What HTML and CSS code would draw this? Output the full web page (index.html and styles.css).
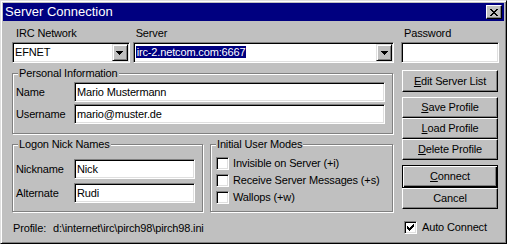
FILE: index.html
```html
<!DOCTYPE html>
<html lang="en">
<head>
  <meta charset="UTF-8" />
  <meta name="viewport" content="width=device-width, initial-scale=1.0" />
  <title>Server Connection</title>
  <link rel="stylesheet" href="styles.css">
</head>
<body>
  <div class="window">
    <div class="titlebar">
      <span class="title">Server Connection</span>
      <div class="close-btn">
        <svg width="8" height="7" viewBox="0 0 8 7" shape-rendering="crispEdges"><path d="M0 0h2v1H0z M6 0h2v1H6z M1 1h2v1H1z M5 1h2v1H5z M2 2h4v1H2z M3 3h2v1H3z M2 4h4v1H2z M1 5h2v1H1z M5 5h2v1H5z M0 6h2v1H0z M6 6h2v1H6z" fill="#000"/></svg>
      </div>
    </div>
    <div class="content">
      <div class="main">
        <div class="top-row">
          <div class="net-field">
            <div class="caption">IRC Network</div>
            <div class="combo">
              <span class="combo-value">EFNET</span>
              <span class="drop-btn"><svg width="7" height="4" viewBox="0 0 7 4" shape-rendering="crispEdges"><path d="M0 0h7v1H0z M1 1h5v1H1z M2 2h3v1H2z M3 3h1v1H3z" fill="#000"/></svg></span>
            </div>
          </div>
          <div class="server-field">
            <div class="caption">Server</div>
            <div class="combo">
              <span class="combo-value"><span class="selected">irc-2.netcom.com:6667</span></span>
              <span class="drop-btn"><svg width="7" height="4" viewBox="0 0 7 4" shape-rendering="crispEdges"><path d="M0 0h7v1H0z M1 1h5v1H1z M2 2h3v1H2z M3 3h1v1H3z" fill="#000"/></svg></span>
            </div>
          </div>
        </div>

        <div class="group personal">
          <span class="group-title">Personal Information</span>
          <div class="form-row">
            <span class="row-label">Name</span>
            <div class="edit wide">Mario Mustermann</div>
          </div>
          <div class="form-row">
            <span class="row-label">Username</span>
            <div class="edit wide">mario@muster.de</div>
          </div>
        </div>

        <div class="lower-row">
          <div class="group nicks">
            <span class="group-title">Logon Nick Names</span>
            <div class="form-row">
              <span class="row-label">Nickname</span>
              <div class="edit short">Nick</div>
            </div>
            <div class="form-row">
              <span class="row-label">Alternate</span>
              <div class="edit short">Rudi</div>
            </div>
          </div>
          <div class="group modes">
            <span class="group-title">Initial User Modes</span>
            <div class="check-row"><span class="checkbox"></span>Invisible on Server (+i)</div>
            <div class="check-row"><span class="checkbox"></span>Receive Server Messages (+s)</div>
            <div class="check-row"><span class="checkbox"></span>Wallops (+w)</div>
          </div>
        </div>

        <div class="profile-line"><span class="profile-label">Profile:</span>d:\internet\irc\pirch98\pirch98.ini</div>
      </div>

      <div class="side">
        <div class="caption">Password</div>
        <div class="edit password"></div>
        <div class="btn edit-list"><u>E</u>dit Server List</div>
        <div class="btn-stack">
          <div class="btn"><u>S</u>ave Profile</div>
          <div class="btn"><u>L</u>oad Profile</div>
          <div class="btn"><u>D</u>elete Profile</div>
        </div>
        <div class="btn default"><u>C</u>onnect</div>
        <div class="btn">Cancel</div>
        <div class="check-row auto">
          <span class="checkbox"><svg width="7" height="7" viewBox="0 0 7 7" shape-rendering="crispEdges"><path d="M6 0h1v1H6z M5 1h2v1H5z M0 2h1v1H0z M4 2h3v1H4z M0 3h2v1H0z M3 3h3v1H3z M0 4h5v1H0z M1 5h3v1H1z M2 6h1v1H2z" fill="#000"/></svg></span>
          Auto Connect
        </div>
      </div>
    </div>
  </div>
</body>
</html>
```

FILE: styles.css
```css
body {
  margin: 0;
  font-family: "Liberation Sans", Arial, sans-serif;
  font-size: 11px;
  line-height: 13px;
  letter-spacing: -0.15px;
  color: #000;
  background-color: #c0c0c0;
}
.window {
  box-sizing: border-box;
  width: 507px;
  height: 244px;
  padding: 2px;
  background-color: #c0c0c0;
  border: 1px solid;
  border-color: #dfdfdf #000 #000 #dfdfdf;
  box-shadow: inset 1px 1px #fff, inset -1px -1px #808080;
}
.titlebar {
  height: 18px;
  padding: 0 2px;
  display: flex;
  align-items: center;
  justify-content: space-between;
  background-color: #000080;
  color: #fff;
}
.title {
  font-size: 13px;
  line-height: 18px;
  letter-spacing: 0;
}
.close-btn {
  box-sizing: border-box;
  width: 16px;
  height: 14px;
  display: flex;
  align-items: center;
  justify-content: center;
  background-color: #c0c0c0;
  border: 1px solid;
  border-color: #fff #000 #000 #fff;
  box-shadow: inset -1px -1px #808080;
}

.content {
  display: flex;
  padding: 6px 0 0 9px;
}
.main {
  width: 382px;
}
.side {
  width: 98px;
  margin-left: 7px;
}

.caption {
  padding-left: 3px;
  margin-bottom: 2px;
}
.top-row {
  display: flex;
  gap: 3px;
}
.net-field { width: 118px; }
.net-field .caption { padding-left: 4px; }
.server-field { width: 262px; }

.combo {
  box-sizing: border-box;
  height: 21px;
  padding: 1px 1px 1px 2px;
  display: flex;
  background-color: #fff;
  border: 1px solid;
  border-color: #808080 #fff #fff #808080;
  box-shadow: inset 1px 1px #000, inset -1px -1px #dfdfdf;
}
.combo-value {
  flex: 1;
  align-self: center;
  white-space: nowrap;
}
.selected {
  background-color: #000080;
  color: #fff;
  padding: 0 1px;
}
.drop-btn {
  box-sizing: border-box;
  width: 16px;
  display: flex;
  align-items: center;
  justify-content: center;
  background-color: #c0c0c0;
  border: 1px solid;
  border-color: #dfdfdf #000 #000 #dfdfdf;
  box-shadow: inset 1px 1px #fff, inset -1px -1px #808080;
}

.edit {
  box-sizing: border-box;
  height: 20px;
  padding: 0 2px;
  display: flex;
  align-items: center;
  background-color: #fff;
  border: 1px solid;
  border-color: #808080 #fff #fff #808080;
  box-shadow: inset 1px 1px #000, inset -1px -1px #dfdfdf;
}
.edit.wide { width: 311px; }
.edit.short { width: 121px; }
.edit.password { height: 21px; }

.group {
  position: relative;
  box-sizing: border-box;
  border: 1px solid #808080;
  box-shadow: inset 1px 1px #fff, 1px 1px #fff;
}
.group-title {
  position: absolute;
  top: -7px;
  left: 5px;
  padding: 0 1px;
  background-color: #c0c0c0;
}
.personal {
  width: 381px;
  margin-top: 10px;
  padding: 8px 0 9px 3px;
  display: flex;
  flex-direction: column;
  gap: 2px;
}
.form-row {
  display: flex;
  align-items: center;
}
.row-label {
  width: 58px;
}

.lower-row {
  display: flex;
  gap: 7px;
  margin-top: 10px;
}
.nicks {
  width: 191px;
  height: 68px;
  padding: 14px 0 0 3px;
  display: flex;
  flex-direction: column;
  gap: 4px;
}
.modes {
  width: 183px;
  height: 68px;
  padding: 12px 0 0 5px;
  display: flex;
  flex-direction: column;
  gap: 4px;
}
.check-row {
  display: flex;
  align-items: center;
  gap: 4px;
  white-space: nowrap;
}
.checkbox {
  box-sizing: border-box;
  width: 13px;
  height: 13px;
  flex-shrink: 0;
  display: flex;
  align-items: center;
  justify-content: center;
  background-color: #fff;
  border: 1px solid;
  border-color: #808080 #fff #fff #808080;
  box-shadow: inset 1px 1px #000, inset -1px -1px #dfdfdf;
}

.profile-line {
  margin-top: 10px;
  padding-left: 1px;
  white-space: nowrap;
}
.profile-label {
  display: inline-block;
  width: 40px;
}

.btn {
  box-sizing: border-box;
  height: 21px;
  margin: 0 1px;
  display: flex;
  align-items: center;
  justify-content: center;
  border: 1px solid;
  border-color: #fff #000 #000 #fff;
  box-shadow: inset -1px -1px #808080;
}
.btn u { text-decoration: underline; }
.edit-list {
  height: 22px;
  margin-top: 7px;
}
.btn-stack {
  margin-top: 5px;
}
.btn.default {
  height: 23px;
  margin-top: 5px;
  border-color: #000;
  box-shadow: inset 1px 1px #fff, inset -1px -1px #000, inset -2px -2px #808080;
}
.auto {
  margin-top: 12px;
  padding-left: 3px;
  gap: 5px;
}
```
